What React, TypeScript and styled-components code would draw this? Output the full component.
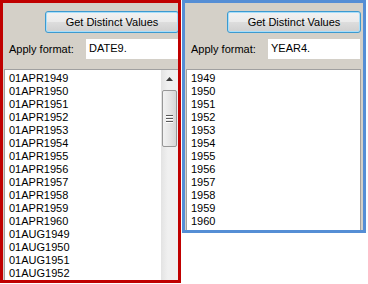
import React from 'react';
import styled, {createGlobalStyle} from 'styled-components';

const GlobalStyle = createGlobalStyle`
  body {
    margin: 0;
    background: #ffffff;
    font-family: "Liberation Sans", Arial, sans-serif;
  }
`;

const Screen = styled.div`
  display: flex;
  align-items: flex-start;
  gap: 1px;
  width: 368px;
  height: 284px;
  overflow: hidden;
`;

const Panel = styled.div<{$color: string; $width: number; $height: number}>`
  box-sizing: border-box;
  width: ${p => p.$width}px;
  height: ${p => p.$height}px;
  border: 3px solid ${p => p.$color};
  background: #d4d0c8;
  overflow: hidden;
`;

const Form = styled.div`
  width: 178px;
  display: flex;
  flex-direction: column;
`;

const ButtonRow = styled.div`
  display: flex;
  padding: 8px 0 0 42px;
`;

const Button = styled.button`
  box-sizing: border-box;
  flex: none;
  width: 134px;
  height: 22px;
  padding: 0;
  border: 1px solid #3c9ad0;
  border-radius: 3px;
  box-shadow: inset 0 0 0 1px #a8defa;
  background: linear-gradient(#f2f2f2 0%, #ebebeb 48%, #dddddd 52%, #cfcfcf 100%);
  font: 11px "Liberation Sans", Arial, sans-serif;
  color: #000;
`;

const FormatRow = styled.div`
  display: flex;
  align-items: center;
  margin-top: 6px;
  padding-left: 6px;
  height: 20px;
`;

const Label = styled.span`
  width: 77px;
  font-size: 11px;
  color: #000;
`;

const TextBox = styled.div`
  box-sizing: border-box;
  width: 92px;
  height: 20px;
  background: #fff;
  padding: 3px 0 0 3px;
  font-size: 11px;
  color: #000;
`;

const ListBox = styled.div`
  box-sizing: border-box;
  display: flex;
  margin: 10px 0 0 1px;
  width: 175px;
  height: 230px;
  border: 1px solid #a0a0a0;
  background: #fff;
`;

const Items = styled.div`
  flex: 1;
  padding: 2px 0 0 4px;
`;

const Item = styled.div`
  height: 13px;
  line-height: 13px;
  font-size: 11px;
  color: #000;
  white-space: nowrap;
`;

const ScrollBar = styled.div`
  flex: none;
  width: 17px;
  display: flex;
  flex-direction: column;
  background: linear-gradient(90deg, #e3e3e3, #f0f0f0 40%, #f0f0f0);
`;

const Arrow = styled.div`
  height: 17px;
  display: flex;
  align-items: center;
  justify-content: center;
`;

const Thumb = styled.div`
  box-sizing: border-box;
  margin: 3px 1px 0 1px;
  height: 57px;
  border: 1px solid #979797;
  border-radius: 2px;
  background: linear-gradient(90deg, #f2f2f2, #e6e6e6 50%, #d6d6d6);
  display: flex;
  flex-direction: column;
  align-items: center;
  justify-content: center;
  gap: 2px;
`;

const Grip = styled.div`
  width: 7px;
  height: 1px;
  background: #5a5a5a;
  box-shadow: 0 1px 0 #ffffff;
`;

const years = Array.from({length: 12}, (_, i) => 1949 + i);
const dateItems = [
  ...years.map(y => `01APR${y}`),
  ...[1949, 1950, 1951, 1952].map(y => `01AUG${y}`),
];

function FormatPanel({format, items, scroll}: {format: string; items: string[]; scroll?: boolean}) {
  return (
    <Form>
      <ButtonRow>
        <Button>Get Distinct Values</Button>
      </ButtonRow>
      <FormatRow>
        <Label>Apply format:</Label>
        <TextBox>{format}</TextBox>
      </FormatRow>
      <ListBox>
        <Items>
          {items.map(i => <Item key={i}>{i}</Item>)}
        </Items>
        {scroll && (
          <ScrollBar>
            <Arrow>
              <svg width="7" height="4" viewBox="0 0 7 4">
                <path d="M0 4 L3.5 0 L7 4 Z" fill="#3a3a3a"/>
              </svg>
            </Arrow>
            <Thumb>
              <Grip/>
              <Grip/>
              <Grip/>
            </Thumb>
          </ScrollBar>
        )}
      </ListBox>
    </Form>
  );
}

export default function App() {
  return (
    <>
      <GlobalStyle/>
      <Screen>
        <Panel $color="#c00000" $width={181} $height={283}>
          <FormatPanel format="DATE9." items={dateItems} scroll/>
        </Panel>
        <Panel $color="#558ed5" $width={184} $height={233}>
          <FormatPanel format="YEAR4." items={years.map(String)}/>
        </Panel>
      </Screen>
    </>
  );
}
